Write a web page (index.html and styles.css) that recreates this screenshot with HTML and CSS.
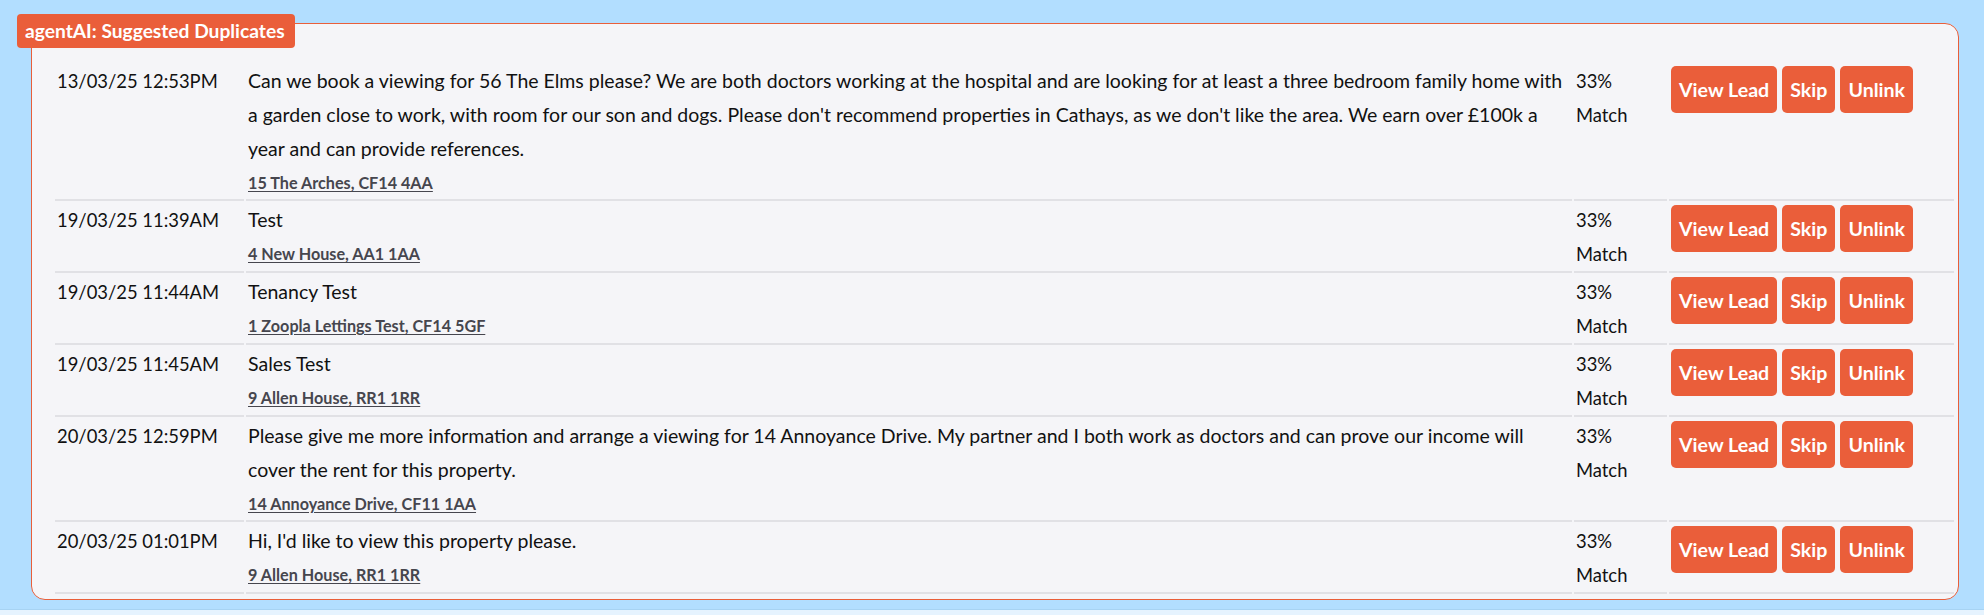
FILE: index.html
```html
<!DOCTYPE html>
<html lang="en">
<head>
<meta charset="utf-8">
<title>agentAI: Suggested Duplicates</title>
<link rel="stylesheet" href="styles.css">
</head>
<body>
<div class="page">
  <section class="card">
    <div class="legend">agentAI: Suggested Duplicates</div>
    <table class="dupes">
      <colgroup>
        <col class="c-date"><col class="c-msg"><col class="c-match"><col class="c-actions">
      </colgroup>
      <tbody>
        <tr>
          <td class="date">13/03/25 12:53PM</td>
          <td class="msg">Can we book a viewing for 56 The Elms please? We are both doctors working at the hospital and are looking for at least a three bedroom family home with a garden close to work, with room for our son and dogs. Please don't recommend properties in Cathays, as we don't like the area. We earn over £100k a year and can provide references.<a class="addr" href="#">15 The Arches, CF14 4AA</a></td>
          <td class="match">33% Match</td>
          <td class="actions"><div class="btns"><button class="btn">View Lead</button><button class="btn">Skip</button><button class="btn">Unlink</button></div></td>
        </tr>
        <tr>
          <td class="date">19/03/25 11:39AM</td>
          <td class="msg">Test<a class="addr" href="#">4 New House, AA1 1AA</a></td>
          <td class="match">33% Match</td>
          <td class="actions"><div class="btns"><button class="btn">View Lead</button><button class="btn">Skip</button><button class="btn">Unlink</button></div></td>
        </tr>
        <tr>
          <td class="date">19/03/25 11:44AM</td>
          <td class="msg">Tenancy Test<a class="addr" href="#">1 Zoopla Lettings Test, CF14 5GF</a></td>
          <td class="match">33% Match</td>
          <td class="actions"><div class="btns"><button class="btn">View Lead</button><button class="btn">Skip</button><button class="btn">Unlink</button></div></td>
        </tr>
        <tr>
          <td class="date">19/03/25 11:45AM</td>
          <td class="msg">Sales Test<a class="addr" href="#">9 Allen House, RR1 1RR</a></td>
          <td class="match">33% Match</td>
          <td class="actions"><div class="btns"><button class="btn">View Lead</button><button class="btn">Skip</button><button class="btn">Unlink</button></div></td>
        </tr>
        <tr>
          <td class="date">20/03/25 12:59PM</td>
          <td class="msg">Please give me more information and arrange a viewing for 14 Annoyance Drive. My partner and I both work as doctors and can prove our income will cover the rent for this property.<a class="addr" href="#">14 Annoyance Drive, CF11 1AA</a></td>
          <td class="match">33% Match</td>
          <td class="actions"><div class="btns"><button class="btn">View Lead</button><button class="btn">Skip</button><button class="btn">Unlink</button></div></td>
        </tr>
        <tr>
          <td class="date">20/03/25 01:01PM</td>
          <td class="msg">Hi, I'd like to view this property please.<a class="addr" href="#">9 Allen House, RR1 1RR</a></td>
          <td class="match">33% Match</td>
          <td class="actions"><div class="btns"><button class="btn">View Lead</button><button class="btn">Skip</button><button class="btn">Unlink</button></div></td>
        </tr>
      </tbody>
    </table>
  </section>
</div>
<div class="next-band"></div>
</body>
</html>
```
FILE: styles.css
```css
html, body {
  margin: 0;
  padding: 0;
  background: #b2deff;
}
body {
  font-family: "Lato", "Carlito", "Open Sans", sans-serif;
  color: #111;
  height: 615px;
  overflow: hidden;
}
.page {
  padding: 23px 0 0 31px;
}
.card {
  position: relative;
  box-sizing: border-box;
  width: 1928px;
  border: 1px solid #e95f3a;
  border-radius: 14px;
  background: #f5f5f8;
  padding: 38px 1px 3px 21px;
}
.legend {
  position: absolute;
  left: -15px;
  top: -10px;
  height: 34px;
  box-sizing: border-box;
  padding: 0 8px;
  background: #ea5e3a;
  color: #fff;
  border-radius: 4px;
  font-weight: 700;
  font-size: 19.2px;
  line-height: 34px;
  width: 278px;
  white-space: nowrap;
}
.dupes {
  border-collapse: separate;
  border-spacing: 2px;
  table-layout: fixed;
  width: 1903px;
}
.c-date { width: 189px; }
.c-msg { width: 1326px; }
.c-match { width: 93px; }
.c-actions { width: 285px; }
.dupes td {
  vertical-align: top;
  padding: 0 2px;
  border-bottom: 2px solid #e1e1e5;
  font-size: 18.4px;
  line-height: 34px;
}
.dupes td.msg {
  font-size: 19.5px;
  padding-right: 9px;
}
.addr {
  display: block;
  color: #46464e;
  font-weight: 700;
  font-size: 16.2px;
  line-height: 24px;
  padding: 5px 0 4px;
  text-decoration: underline;
  text-underline-offset: 2px;
}
.match {
  word-spacing: 100px;
}
.btns {
  display: flex;
  gap: 5px;
  padding-top: 2px;
}
.btn {
  height: 47px;
  border: 0;
  border-radius: 5px;
  background: #ea5e3a;
  color: #fff;
  font-family: "Lato", "Carlito", sans-serif;
  font-weight: 700;
  font-size: 19.6px;
  padding: 0 8px;
  cursor: pointer;
}
.next-band {
  margin-top: 9px;
  height: 20px;
  border-top: 1px solid #a7d3f3;
  background: #e6f3fe;
}
```
